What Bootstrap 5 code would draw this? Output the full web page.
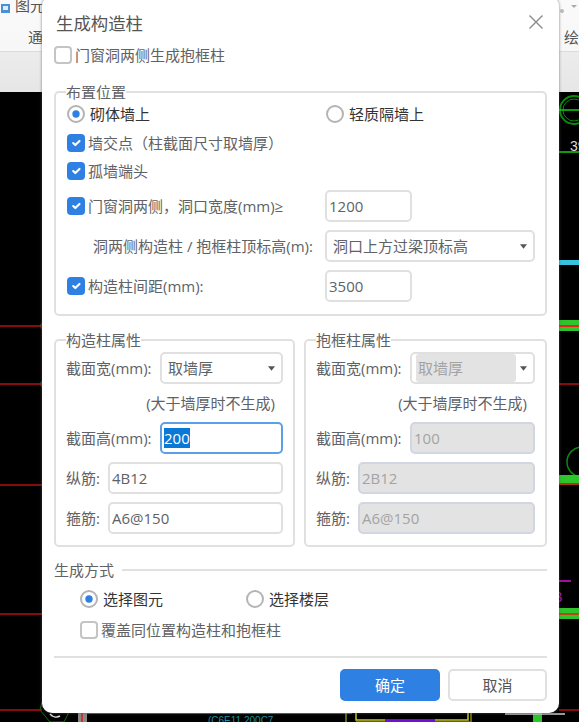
<!DOCTYPE html>
<html lang="zh">
<head>
<meta charset="utf-8">
<title>生成构造柱</title>
<link href="https://cdn.jsdelivr.net/npm/bootstrap@5.3.0/dist/css/bootstrap.min.css" rel="stylesheet">
<style>
html,body{width:579px;height:722px;overflow:hidden;background:#000;}
body{font-family:"Open Sans","Noto Sans CJK SC",sans-serif;font-size:15px;color:#606266;position:relative;line-height:20px;}
.app-top{height:92px;background:linear-gradient(#fafafa 0,#f7f7f7 52px,#ececec 52px,#e6e6e6 92px);color:#555;}
.app-row1{height:15px;padding-left:0;line-height:11px;overflow:hidden;}
.app-row2{height:37px;padding:12px 0 0 28px;border-bottom:1px solid #dcdcdc;}
.app-cad{display:block;}
.dlg{position:absolute;left:42px;top:-4px;width:517px;height:717px;background:#fff;border-radius:10px;padding:4px 12px 0;box-shadow:0 0 3px rgba(90,90,90,.8);}
.dlg-head{height:44px;padding:10px 2px 0;}
.dlg-title{font-size:17.4px;line-height:26px;color:#555;}
.dlg-x{width:16px;height:16px;margin:4px 1px 0 0;background:none;border:0;padding:0;}
.chk{display:flex;align-items:center;height:22px;margin:0;}
.chk .form-check-input{width:18px;height:18px;margin:0 3px 0 0;flex:none;border:2px solid #c4c4c4;border-radius:4px;background-color:#fff;float:none;}
.chk .form-check-input:checked{background-color:#2e80e3;border-color:#2e80e3;}
.chk .form-check-input[type=radio]{border-radius:50%;margin-right:5px;border-color:#b4b4b4;}
.chk .form-check-input[type=radio]:checked{background-color:#fff;border-color:#b4b4b4;background-image:url("data:image/svg+xml,%3csvg xmlns='http://www.w3.org/2000/svg' viewBox='-4 -4 8 8'%3e%3ccircle r='2.1' fill='%232e80e3'/%3e%3c/svg%3e");}
.chk-dark{color:#333;}
.grp{border:2px solid #e0e0e0;border-radius:5px;padding:0 10px;margin:0;min-width:0;}
.grp legend{float:none;width:auto;padding:0;margin:0;font-size:15px;line-height:20px;color:#606266;}
.grp-main{height:234px;margin-top:16px;}
.grp-main .chk{margin-left:1px;}
.rad-a{width:258px;}
.r-first{margin-top:1px;}
.gap-7{margin-top:7px;}
.gap-6{margin-top:6px;}
.gap-8{margin-top:8px;}
.gap-9{margin-top:9px;}
.ctl{height:32px;border:2px solid #e0e0e0;border-radius:5px;padding:0 2px;font-size:15px;line-height:28px;color:#606266;box-shadow:none;background-color:#fff;}
.w-num{width:87px;}
.lbl-top{width:259px;padding-left:27px;white-space:nowrap;flex:none;}
.lbl-chk{width:258px;flex:none;}
.w-sel{width:210px;}
.sel{padding:0 5px 0 6px;background-image:url("data:image/svg+xml,%3csvg xmlns='http://www.w3.org/2000/svg' viewBox='0 0 8 5'%3e%3cpath d='M0 0h8L4 5z' fill='%23555'/%3e%3c/svg%3e");background-size:7px 5px;background-position:right 6px center;background-repeat:no-repeat;}
.grp-row{margin-top:14px;}
.grp-l{width:241px;height:217px;flex:none;}
.grp-r{width:243px;height:217px;flex:none;margin-left:9px;}
.lbl{flex:none;white-space:nowrap;}
.lbl-w{width:94px;}
.lbl-s{width:42px;}
.pt-s{padding-top:2px;}
.hint{height:22px;text-align:right;padding-right:8px;margin-top:9px;white-space:nowrap;}
.ctl-on{border-color:#5b9fe8;color:#606266;}
.ctl-on span{background:#0a78d7;color:#fff;}
.ctl-off,.ctl-off:disabled{background:#e3e3e3;border-color:#d2d6e2;color:#a3a3a3;opacity:1;}
.sel-off{display:flex;align-items:stretch;padding:0 0 0 4px;}
.sel-off span{width:100px;background:#e3e3e3;color:#a3a3a3;padding-left:2px;border-radius:3px;}
.div-row{margin-top:13px;height:20px;}
.div-line{flex:1;height:2px;background:#e0e0e0;margin-left:8px;}
.ways{padding-left:26px;margin-top:8px;}
.way-a{width:166px;}
.foot-line{height:2px;background:#e0e0e0;margin-top:15px;}
.foot{margin-top:11px;gap:8px;}
.act{height:32px;padding:0;font-size:15px;line-height:28px;border-radius:5px;border-width:2px;}
.act-ok{width:100px;background:#2e80e3;border-color:#2e80e3;color:#fff;}
.act-no{width:99px;background:#fff;border-color:#e0e0e0;color:#555;}
</style>
</head>
<body>
<div class="app-top">
  <div class="app-row1 d-flex justify-content-between">
    <div class="d-flex"><svg width="11" height="14" viewBox="0 0 11 14"><rect x="1" y="4" width="9" height="9" fill="#4a90d8"/><rect x="3" y="6" width="5" height="4" fill="#dcecf9"/></svg><span class="ms-1">图元</span></div>
    <svg width="20" height="14" viewBox="0 0 20 14"><circle cx="3" cy="11" r="2" fill="#bbb"/><path d="M12 5h6l-3 3z" fill="#aaa"/></svg>
  </div>
  <div class="app-row2 d-flex justify-content-between"><span>通</span><span class="ms-auto">绘</span></div>
</div>
<svg class="app-cad" width="579" height="630" viewBox="0 92 579 630">
  <g fill="none" stroke="#0a8a0a">
    <circle cx="574" cy="110" r="14" stroke-width="2"/>
    <circle cx="574" cy="110" r="11"/>
    <circle cx="582" cy="462" r="15" stroke-width="1.5"/>
    <path d="M40 326l3-4M40 326l3 4M40 384l3-4M40 384l3 4"/>
    <path d="M42 702l-2 8 10 12h14l6-12" stroke="#0a7a0a"/>
  </g>
  <path d="M559 110h20M559 152h20" stroke="#10d010" stroke-width="1.5"/>
  <rect x="559" y="260" width="20" height="5" fill="#37c3e0"/>
  <rect x="559" y="320" width="20" height="11" fill="#2cc52c"/>
  <rect x="559" y="325" width="20" height="2" fill="#f02020"/>
  <rect x="559" y="475" width="20" height="10" fill="#2cc52c"/>
  <rect x="559" y="483" width="20" height="2" fill="#b03018"/>
  <rect x="559" y="608" width="20" height="11" fill="#2cc52c"/>
  <rect x="559" y="613" width="20" height="2" fill="#b84818"/>
  <path d="M0 326h42M0 384h42M0 485h42M0 614h42M0 710h42M559 384h20M559 710h20" stroke="#b01010" stroke-width="1.5"/>
  <path d="M559 581h12" stroke="#a010a0" stroke-width="2"/>
  <text x="554" y="602" fill="#b010b0" font-size="15" font-family="Liberation Sans">3</text>
  <text x="570" y="151" fill="#ddd" font-size="14" font-family="Liberation Sans">39</text>
  <path d="M50 714a8 8 0 0 0 10 2" fill="none" stroke="#ddd" stroke-width="1.5"/>
  <rect x="78" y="713" width="9" height="9" fill="#888"/><rect x="81" y="713" width="2" height="9" fill="#c33"/>
  <path d="M87 713.500h265" stroke="#2a7a2a"/>
  <text x="208" y="724" fill="#1a8f9f" font-size="10" font-family="Liberation Sans">(C6E11 200C7</text>
  <path d="M346 713v9M471 713v9M470 722h-114" stroke="#c8c820" fill="none"/>
  <path d="M356 713v7h112v-7" fill="none" stroke="#c8c820" stroke-width="1.5"/>
  <rect x="385" y="719" width="50" height="3" fill="#7010d0"/>
  <rect x="533" y="713" width="9" height="9" fill="#2cc52c"/>
  <path d="M505 714h60" stroke="#ccc" stroke-width="1.500"/>
</svg>

<div class="dlg">
  <div class="dlg-head d-flex justify-content-between align-items-start">
    <div class="dlg-title">生成构造柱</div>
    <button class="dlg-x" type="button" aria-label="关闭"><svg class="d-block" width="16" height="16" viewBox="0 0 16 16"><path d="M1.500 1.500l13 13M14.500 1.500l-13 13" stroke="#8a8a8a" stroke-width="1.400" fill="none"/></svg></button>
  </div>
  <label class="chk"><input class="form-check-input" type="checkbox"><span>门窗洞两侧生成抱框柱</span></label>

  <fieldset class="grp grp-main">
    <legend>布置位置</legend>
    <div class="d-flex r-first">
      <label class="chk chk-dark rad-a"><input class="form-check-input" type="radio" name="p" checked><span>砌体墙上</span></label>
      <label class="chk chk-dark"><input class="form-check-input" type="radio" name="p"><span>轻质隔墙上</span></label>
    </div>
    <label class="chk gap-7"><input class="form-check-input" type="checkbox" checked><span>墙交点（柱截面尺寸取墙厚）</span></label>
    <label class="chk gap-6"><input class="form-check-input" type="checkbox" checked><span>孤墙端头</span></label>
    <div class="d-flex align-items-center gap-8">
      <label class="chk lbl-chk"><input class="form-check-input" type="checkbox" checked><span>门窗洞两侧，洞口宽度(mm)≥</span></label>
      <input class="form-control ctl w-num" value="1200">
    </div>
    <div class="d-flex align-items-center gap-8">
      <div class="lbl-top">洞两侧构造柱 / 抱框柱顶标高(m):</div>
      <select class="form-select ctl sel w-sel"><option>洞口上方过梁顶标高</option></select>
    </div>
    <div class="d-flex align-items-center gap-8">
      <label class="chk lbl-chk"><input class="form-check-input" type="checkbox" checked><span>构造柱间距(mm):</span></label>
      <input class="form-control ctl w-num" value="3500">
    </div>
  </fieldset>

  <div class="d-flex grp-row">
    <fieldset class="grp grp-l">
      <legend>构造柱属性</legend>
      <div class="d-flex align-items-center pt-s">
        <span class="lbl lbl-w">截面宽(mm):</span>
        <select class="form-select ctl sel flex-fill"><option>取墙厚</option></select>
      </div>
      <div class="hint">(大于墙厚时不生成)</div>
      <div class="d-flex align-items-center gap-7">
        <span class="lbl lbl-w">截面高(mm):</span>
        <div class="form-control ctl ctl-on flex-fill"><span>200</span></div>
      </div>
      <div class="d-flex align-items-center gap-8">
        <span class="lbl lbl-s">纵筋:</span>
        <input class="form-control ctl flex-fill" value="4B12">
      </div>
      <div class="d-flex align-items-center gap-8">
        <span class="lbl lbl-s">箍筋:</span>
        <input class="form-control ctl flex-fill" value="A6@150">
      </div>
    </fieldset>
    <fieldset class="grp grp-r">
      <legend>抱框柱属性</legend>
      <div class="d-flex align-items-center pt-s">
        <span class="lbl lbl-w">截面宽(mm):</span>
        <div class="form-select ctl sel sel-off flex-fill"><span>取墙厚</span></div>
      </div>
      <div class="hint">(大于墙厚时不生成)</div>
      <div class="d-flex align-items-center gap-7">
        <span class="lbl lbl-w">截面高(mm):</span>
        <input class="form-control ctl ctl-off flex-fill" value="100" disabled>
      </div>
      <div class="d-flex align-items-center gap-8">
        <span class="lbl lbl-s">纵筋:</span>
        <input class="form-control ctl ctl-off flex-fill" value="2B12" disabled>
      </div>
      <div class="d-flex align-items-center gap-8">
        <span class="lbl lbl-s">箍筋:</span>
        <input class="form-control ctl ctl-off flex-fill" value="A6@150" disabled>
      </div>
    </fieldset>
  </div>

  <div class="d-flex align-items-center div-row"><span>生成方式</span><div class="div-line"></div></div>
  <div class="ways">
    <div class="d-flex">
      <label class="chk chk-dark way-a"><input class="form-check-input" type="radio" name="w" checked><span>选择图元</span></label>
      <label class="chk chk-dark"><input class="form-check-input" type="radio" name="w"><span>选择楼层</span></label>
    </div>
    <label class="chk gap-9"><input class="form-check-input" type="checkbox"><span>覆盖同位置构造柱和抱框柱</span></label>
  </div>
  <div class="foot-line"></div>
  <div class="d-flex justify-content-end foot">
    <button class="btn act act-ok" type="button">确定</button>
    <button class="btn act act-no" type="button">取消</button>
  </div>
</div>
<script src="https://cdn.jsdelivr.net/npm/bootstrap@5.3.0/dist/js/bootstrap.bundle.min.js"></script>
</body>
</html>
